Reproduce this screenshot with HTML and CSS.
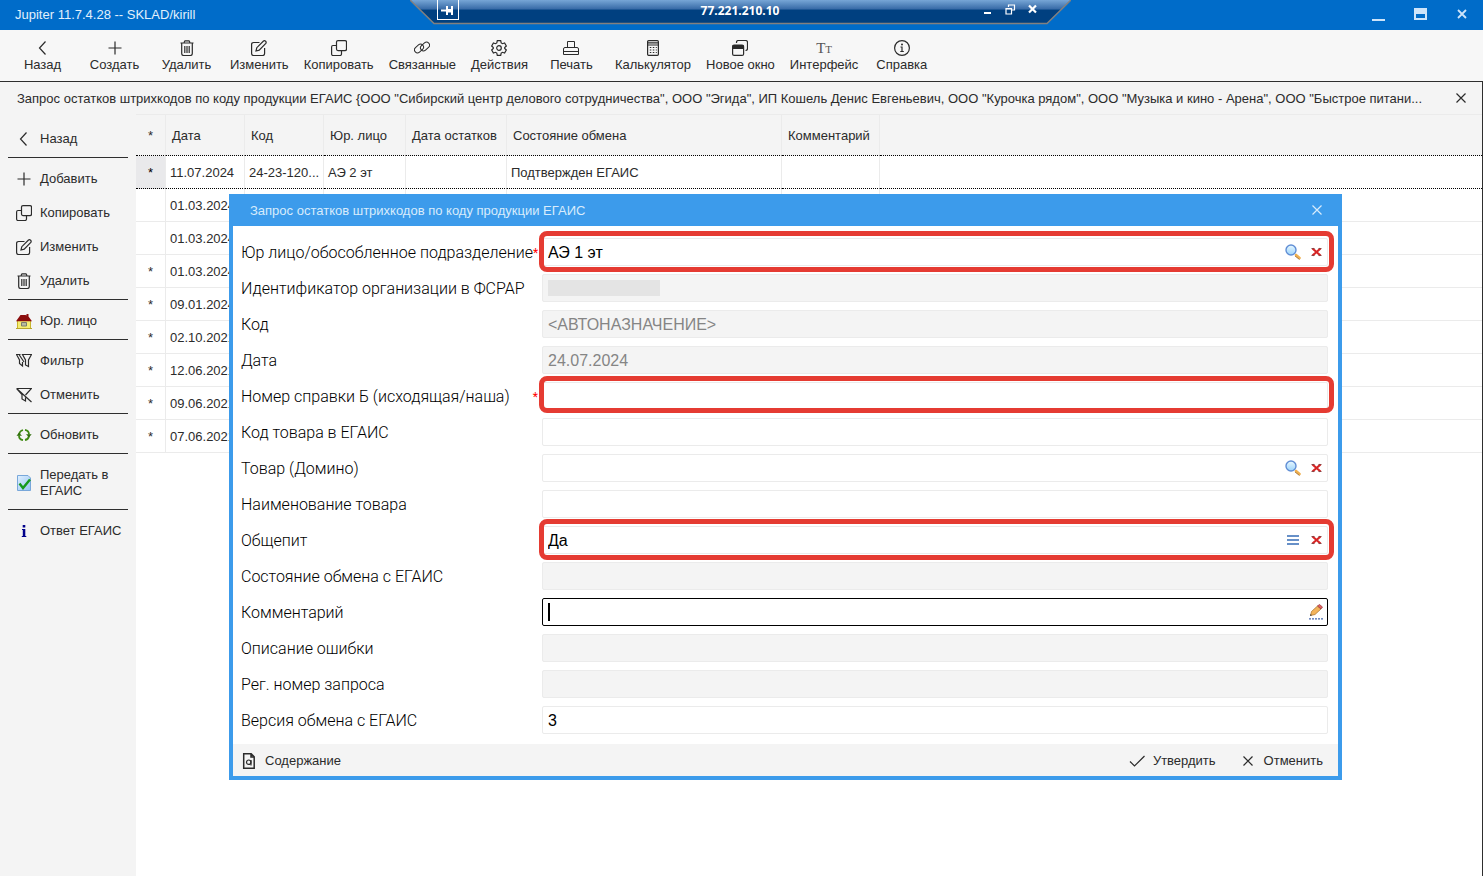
FILE: index.html
```html
<!DOCTYPE html>
<html lang="ru">
<head>
<meta charset="utf-8">
<title>Jupiter 11.7.4.28 -- SKLAD/kirill</title>
<link rel="stylesheet" href="styles.css">
</head>
<body>
<svg class="sprite" aria-hidden="true">
  <defs>
    <linearGradient id="lens" x1="0" y1="0" x2="0" y2="1"><stop offset="0" stop-color="#e9f8ff"/><stop offset="1" stop-color="#9bd3fb"/></linearGradient>
    <linearGradient id="sheet" x1="0" y1="0" x2="1" y2="1"><stop offset="0" stop-color="#e0f0ff"/><stop offset="1" stop-color="#94c4f2"/></linearGradient>
  </defs>
  <symbol id="back" viewBox="0 0 16 16"><path class="ln" d="M10.5 1.5 4.5 8l6 6.5"/></symbol>
  <symbol id="plus" viewBox="0 0 16 16"><path class="ln" d="M8 1.5v13M1.5 8h13"/></symbol>
  <symbol id="trash" viewBox="0 0 16 16"><path class="ln" d="M1.5 3h13M5 2.5 6 .8h4l1 1.7M2.7 3.5v10q0 2 2 2h6.6q2 0 2-2v-10M5.8 6v7M8 6v7M10.2 6v7"/></symbol>
  <symbol id="edit" viewBox="0 0 16 16"><path class="ln" d="M8.5 2.5H2.6Q.6 2.5.6 4.5v9q0 2 2 2h9q2 0 2-2V8M5 11l.8-3.3L12.500 1q1-.8 2.100.2 1 1.100.2 2.200L8.200 10.200Z"/></symbol>
  <symbol id="copy" viewBox="0 0 16 16"><rect class="ln" x="5.500" y=".6" width="10" height="10" rx="1.500"/><path class="ln" d="M5.500 5.500H2Q.6 5.500.6 7v7q0 1.500 1.400 1.500H9q1.500 0 1.500-1.500v-3.400"/></symbol>
  <symbol id="link" viewBox="0 0 16 16"><g class="ln thin"><rect x="0" y="5.500" width="10" height="6" rx="3" transform="rotate(-42 5 8.500)"/><rect x="6" y="3.500" width="10" height="6" rx="3" transform="rotate(-42 11 6.500)"/></g></symbol>
  <symbol id="gear" viewBox="0 0 16 16"><path class="ln" d="M6.300.7h3.400l.5 2.200 1.300.8 2.100-.7 1.700 3-1.600 1.500v1l1.600 1.500-1.700 3-2.100-.7-1.300.8-.5 2.200H6.300l-.5-2.200-1.300-.8-2.100.7-1.700-3 1.600-1.500v-1L.7 6l1.700-3 2.100.7 1.300-.8Z"/><circle class="ln" cx="8" cy="8" r="2.300"/></symbol>
  <symbol id="print" viewBox="0 0 16 16"><path class="ln thin" d="M4.500 7.500v-6h7v6M2 7.500h12q1.500 0 1.500 1.500v5.500H.5V9Q.5 7.500 2 7.500ZM.5 11.500h15"/></symbol>
  <symbol id="calc" viewBox="0 0 16 16"><rect class="ln" x="2.600" y=".7" width="10.800" height="14.600" rx="1"/><path class="ln" d="M3 2.800h10M3 5h10"/><path class="ln" stroke-dasharray="1.500 1.500" d="M4.800 7.500h7M4.800 10h7M4.800 12.500h7"/></symbol>
  <symbol id="windows" viewBox="0 0 16 16"><path class="ln" d="M4.500 3V2.500q0-2 2-2h7q2 0 2 2v6q0 2-2 2"/><rect class="ln" x=".6" y="5" width="11" height="10.400" rx="1.500"/><path class="fl" d="M.6 5h11v4H.6z"/></symbol>
  <symbol id="info" viewBox="0 0 16 16"><circle class="ln" cx="8" cy="8" r="7.400"/><path class="ln" d="M6.500 7H8v4.500M6.300 11.500h3.500"/><circle class="fl" cx="8" cy="4.500" r="1"/></symbol>
  <symbol id="house" viewBox="0 0 16 16"><path fill="#f5ee72" stroke="#c8b52e" d="M1.500 7.500h13v8h-13z"/><path fill="#8b0d0d" d="M4.500 2 0 8.200h16L12.500 3.500V1h-2v1.500L9.500 2Z"/><path fill="#b8bca0" stroke="#7c7c6c" d="M5.500 9.500h5v3.500h-5z"/><path stroke="#b7a52c" d="M0 15.500h16"/></symbol>
  <symbol id="filters" viewBox="0 0 16 16"><path class="ln" d="M6.500 1.500h9l-3 5.500v6.500L9.500 12V7ZM4.500 1.500H.5L3.500 7v3.500l3 2.500V9M3 1.500 8 9"/></symbol>
  <symbol id="nofilter" viewBox="0 0 16 16"><path class="ln" d="M.6 1.500h14.900L9.500 8M.6 1.500l5.400 6v4.500l3.500 2v-3.500M.6 1.500 15.500 15"/></symbol>
  <symbol id="refresh" viewBox="0 0 16 16"><g fill="none" stroke="#3f8a12" stroke-width="1.800"><path d="M3 7.500q.5-3.500 4-4.500M9 2.800q4 .7 4 4.700M13 9q-.5 3.300-4 4M7 13.200Q3 12.500 3 8.500"/></g><path fill="#2f6d0b" d="M.5 8.800 3 5.800l3 3ZM10 7.200l3 3 2.700-3Z"/></symbol>
  <symbol id="send" viewBox="0 0 16 16"><path fill="url(#sheet)" stroke="#78a7da" d="M1.500.5h10.500l2.500 2.500v12.500h-13z"/><path fill="none" stroke="#159a1c" stroke-width="2.400" d="m3.500 8.500 3.500 4.500 7-8.500"/></symbol>
  <symbol id="bluei" viewBox="0 0 16 16"><path fill="#00008b" d="M6.700 2h2.600v2.500H6.700zM6 6h3.300v7h1v1H5.800v-1h1V7H6z"/></symbol>
  <symbol id="cross" viewBox="0 0 16 16"><path class="ln" d="m3.500 3.500 9 9m0-9-9 9"/></symbol>
  <symbol id="check" viewBox="0 0 16 16"><path class="ln" d="m1 8.500 4.500 4.500 10-10"/></symbol>
  <symbol id="search" viewBox="0 0 16 16"><path stroke="#efb04f" stroke-width="2.600" stroke-linecap="round" d="m11 11 3.500 3"/><path stroke="#9a672c" stroke-width=".8" d="m10 12 4.500 3.500"/><circle cx="6" cy="6" r="5" fill="url(#lens)" stroke="#608ed5" stroke-width="1.400"/></symbol>
  <symbol id="clear" viewBox="0 0 16 16"><path stroke="#d62525" stroke-width="2.200" d="m4.500 4.500 8 7m0-7-8 7"/><path stroke="#8a4444" d="M3.500 4.500h3m4 0h3M3.500 11.500h3m4 0h3"/></symbol>
  <symbol id="list" viewBox="0 0 16 16"><path stroke="#6790c8" stroke-width="2" d="M2 4h12M2 8h12M2 12h12"/></symbol>
  <symbol id="pencil" viewBox="0 0 16 16"><path fill="#f3b45b" stroke="#a6702b" stroke-width=".7" d="m2.500 11.500 1-4 6-5.500 3.500 3-6 5.500Z"/><path fill="#e26060" stroke="#943535" stroke-width=".7" d="m9.500 2 2-1.500 3 2.500L13 5Z"/><path fill="#444" d="m2 12 .5-2 1.500 1.300Z"/><path stroke="#4668ae" stroke-width="1.300" stroke-dasharray="2 1" d="M1 14.800h14"/></symbol>
  <symbol id="doc" viewBox="0 0 16 16"><path class="ln thick" d="M2.700.8h7.500l3 3v11.500H2.700zM10 .8v3.200h3.200"/><circle class="ln" cx="7.700" cy="9.200" r="2.200"/><path class="ln" d="M10 7v5.500"/></symbol>
</svg>

<header class="titlebar">
  <span>Jupiter 11.7.4.28 -- SKLAD/kirill</span>
  <div class="win-controls">
    <button aria-label="Свернуть"><svg viewBox="0 0 16 16"><path d="M2 13h13" stroke="#cde4fa" stroke-width="2"/></svg></button>
    <button aria-label="Развернуть"><svg viewBox="0 0 16 16"><path d="M2 1h13v12H2z" fill="#cde4fa"/><path d="M4 7h9v4H4z" fill="#006cc9"/></svg></button>
    <button aria-label="Закрыть"><svg viewBox="0 0 16 16"><path d="m4 3 8 8m0-8-8 8" stroke="#cde4fa" stroke-width="1.800"/></svg></button>
  </div>
  <div class="remote">
    <svg class="remote-bg" viewBox="0 0 661 25" preserveAspectRatio="none">
      <defs><linearGradient id="rb" x1="0" y1="0" x2="0" y2="1"><stop offset="0" stop-color="#77a6d6"/><stop offset=".4" stop-color="#3568a5"/><stop offset=".41" stop-color="#004080"/><stop offset="1" stop-color="#004080"/></linearGradient></defs>
      <path d="M0 0 24 23.500H637L661 0" fill="url(#rb)" stroke="#82807f" stroke-width="1.500"/>
    </svg>
    <button class="pin" aria-label="Закрепить"><svg viewBox="0 0 16 16"><path d="M1 8.500h6M7 4v9M12 4v9" stroke="#fff" stroke-width="2" fill="none"/><path d="M7 7h5v3.500H7z" fill="#fff"/></svg></button>
    <span class="remote-ip">77.221.210.10</span>
    <div class="remote-controls">
      <button aria-label="Свернуть сеанс"><svg viewBox="0 0 12 12"><path d="M3 10h7" stroke="#fff" stroke-width="2"/></svg></button>
      <button aria-label="Восстановить сеанс"><svg viewBox="0 0 12 12"><path d="M4.500 4V2h6v5H8M2 5.500h5.500V11H2zM4 2h7M2 6h6" stroke="#fff" stroke-width="1.200" fill="none"/></svg></button>
      <button aria-label="Закрыть сеанс"><svg viewBox="0 0 12 12"><path d="m2 2.500 7 7m0-7-7 7" stroke="#fff" stroke-width="2.200"/></svg></button>
    </div>
  </div>
</header>

<nav class="toolbar">
  <button><svg><use href="#back"/></svg>Назад</button>
  <button><svg><use href="#plus"/></svg>Создать</button>
  <button><svg><use href="#trash"/></svg>Удалить</button>
  <button><svg><use href="#edit"/></svg>Изменить</button>
  <button><svg><use href="#copy"/></svg>Копировать</button>
  <button><svg><use href="#link"/></svg>Связанные</button>
  <button><svg><use href="#gear"/></svg>Действия</button>
  <button><svg><use href="#print"/></svg>Печать</button>
  <button><svg><use href="#calc"/></svg>Калькулятор</button>
  <button><svg><use href="#windows"/></svg>Новое окно</button>
  <button><span class="tt">T<small>T</small></span>Интерфейс</button>
  <button><svg><use href="#info"/></svg>Справка</button>
</nav>

<main class="window">
  <div class="caption">
    <h1>Запрос остатков штрихкодов по коду продукции ЕГАИС {ООО "Сибирский центр делового сотрудничества", ООО "Эгида", ИП Кошель Денис Евгеньевич, ООО "Курочка рядом", ООО "Музыка и кино - Арена", ООО "Быстрое питани...</h1>
    <button class="icon-btn" aria-label="Закрыть вкладку"><svg><use href="#cross"/></svg></button>
  </div>
  <div class="body">
    <aside class="side">
      <div class="group"><button><svg><use href="#back"/></svg>Назад</button></div>
      <div class="group">
        <button><svg><use href="#plus"/></svg>Добавить</button>
        <button><svg><use href="#copy"/></svg>Копировать</button>
        <button><svg><use href="#edit"/></svg>Изменить</button>
        <button><svg><use href="#trash"/></svg>Удалить</button>
      </div>
      <div class="group"><button><svg><use href="#house"/></svg>Юр. лицо</button></div>
      <div class="group">
        <button><svg><use href="#filters"/></svg>Фильтр</button>
        <button><svg><use href="#nofilter"/></svg>Отменить</button>
      </div>
      <div class="group"><button><svg><use href="#refresh"/></svg>Обновить</button></div>
      <div class="group"><button><svg><use href="#send"/></svg>Передать в ЕГАИС</button></div>
      <div class="group"><button><svg><use href="#bluei"/></svg>Ответ ЕГАИС</button></div>
    </aside>
    <section class="content">
      <table>
        <colgroup><col class="c-mark"><col class="c-date"><col class="c-code"><col class="c-org"><col class="c-rest"><col class="c-state"><col class="c-note"><col></colgroup>
        <thead><tr><th>*</th><th>Дата</th><th>Код</th><th>Юр. лицо</th><th>Дата остатков</th><th>Состояние обмена</th><th>Комментарий</th><th></th></tr></thead>
        <tbody>
          <tr class="current"><td>*</td><td>11.07.2024</td><td>24-23-120...</td><td>АЭ 2 эт</td><td></td><td>Подтвержден ЕГАИС</td><td></td><td></td></tr>
          <tr><td></td><td>01.03.2024</td><td></td><td></td><td></td><td></td><td></td><td></td></tr>
          <tr><td></td><td>01.03.2024</td><td></td><td></td><td></td><td></td><td></td><td></td></tr>
          <tr><td>*</td><td>01.03.2024</td><td></td><td></td><td></td><td></td><td></td><td></td></tr>
          <tr><td>*</td><td>09.01.2024</td><td></td><td></td><td></td><td></td><td></td><td></td></tr>
          <tr><td>*</td><td>02.10.2021</td><td></td><td></td><td></td><td></td><td></td><td></td></tr>
          <tr><td>*</td><td>12.06.2021</td><td></td><td></td><td></td><td></td><td></td><td></td></tr>
          <tr><td>*</td><td>09.06.2021</td><td></td><td></td><td></td><td></td><td></td><td></td></tr>
          <tr><td>*</td><td>07.06.2021</td><td></td><td></td><td></td><td></td><td></td><td></td></tr>
        </tbody>
      </table>
    </section>
  </div>
</main>

<form class="dialog" role="dialog" aria-labelledby="dlg-title">
  <div class="dialog-head">
    <h2 id="dlg-title">Запрос остатков штрихкодов по коду продукции ЕГАИС</h2>
    <button type="button" class="icon-btn" aria-label="Закрыть"><svg><use href="#cross"/></svg></button>
  </div>
  <div class="fields">
    <label for="f1">Юр лицо/обособленное подразделение<span class="req">*</span></label>
    <div class="field marked"><input id="f1" value="АЭ 1 эт"><button type="button" class="icon-btn" aria-label="Найти"><svg><use href="#search"/></svg></button><button type="button" class="icon-btn" aria-label="Очистить"><svg><use href="#clear"/></svg></button></div>
    <label for="f2">Идентификатор организации в ФСРАР</label>
    <div class="field off"><span class="masked"></span><input id="f2" disabled></div>
    <label for="f3">Код</label>
    <div class="field off"><input id="f3" value="&lt;АВТОНАЗНАЧЕНИЕ&gt;" disabled></div>
    <label for="f4">Дата</label>
    <div class="field off"><input id="f4" value="24.07.2024" disabled></div>
    <label for="f5">Номер справки Б (исходящая/наша)<span class="req">*</span></label>
    <div class="field marked slim"><input id="f5"></div>
    <label for="f6">Код товара в ЕГАИС</label>
    <div class="field"><input id="f6"></div>
    <label for="f7">Товар (Домино)</label>
    <div class="field"><input id="f7"><button type="button" class="icon-btn" aria-label="Найти товар"><svg><use href="#search"/></svg></button><button type="button" class="icon-btn" aria-label="Очистить товар"><svg><use href="#clear"/></svg></button></div>
    <label for="f8">Наименование товара</label>
    <div class="field"><input id="f8"></div>
    <label for="f9">Общепит</label>
    <div class="field marked"><input id="f9" value="Да"><button type="button" class="icon-btn" aria-label="Выбрать"><svg><use href="#list"/></svg></button><button type="button" class="icon-btn" aria-label="Сбросить"><svg><use href="#clear"/></svg></button></div>
    <label for="f10">Состояние обмена с ЕГАИС</label>
    <div class="field off"><input id="f10" disabled></div>
    <label for="f11">Комментарий</label>
    <div class="field active"><span class="caret"></span><input id="f11"><button type="button" class="icon-btn" aria-label="Редактировать"><svg><use href="#pencil"/></svg></button></div>
    <label for="f12">Описание ошибки</label>
    <div class="field off"><input id="f12" disabled></div>
    <label for="f13">Рег. номер запроса</label>
    <div class="field off"><input id="f13" disabled></div>
    <label for="f14">Версия обмена с ЕГАИС</label>
    <div class="field"><input id="f14" value="3"></div>
  </div>
  <div class="dialog-foot">
    <button type="button"><svg><use href="#doc"/></svg>Содержание</button>
    <span class="spacer"></span>
    <button type="button"><svg><use href="#check"/></svg>Утвердить</button>
    <button type="button"><svg><use href="#cross"/></svg>Отменить</button>
  </div>
</form>
</body>
</html>
```
FILE: styles.css
```css
* { box-sizing: border-box; }

body {
  margin: 0;
  min-height: 100vh;
  display: flex;
  flex-direction: column;
  position: relative;
  background: #fff;
  color: #2b2b2b;
  font: 13px/16px "Liberation Sans", Arial, sans-serif;
}

button {
  border: 0;
  padding: 0;
  background: none;
  color: inherit;
  font: inherit;
}

svg { display: block; flex: none; }
.sprite { position: absolute; width: 0; height: 0; }
.ln { fill: none; stroke: currentColor; stroke-width: 1.2; }
.ln.thin { stroke-width: 1; }
.ln.thick { stroke-width: 1.5; }
.fl { fill: currentColor; }

.titlebar {
  position: relative;
  display: flex;
  align-items: center;
  justify-content: space-between;
  height: 30px;
  padding: 0 13px 0 15px;
  background: #006cc9;
  color: #e2f0fc;
}
.win-controls { display: flex; gap: 26px; }
.win-controls svg { width: 16px; height: 16px; }

.remote {
  position: absolute;
  top: 0;
  left: calc(50% - 332px);
  width: 661px;
  height: 25px;
  display: flex;
  align-items: flex-start;
  justify-content: space-between;
  padding: 0 32px 0 27px;
}
.remote-bg { position: absolute; inset: 0; width: 100%; height: 100%; }
.remote-ip {
  position: absolute;
  inset: 3px 0 auto;
  text-align: center;
  color: #fff;
  font: bold 12px/16px "Noto Sans", sans-serif;
}
.pin {
  position: relative;
  width: 22px;
  height: 20px;
  padding: 1px 2px;
  border: 1px solid #fff;
  border-top: 0;
}
.pin svg { width: 16px; height: 16px; }
.remote-controls { position: relative; display: flex; gap: 11px; padding-top: 3px; }
.remote-controls svg { width: 12px; height: 12px; }

.toolbar {
  display: flex;
  gap: 1px;
  height: 51px;
  padding: 10px 7px 0;
  background: #f7f7f7;
}
.toolbar button {
  display: flex;
  flex-direction: column;
  align-items: center;
  justify-content: flex-start;
  gap: 1px;
  min-width: 71px;
  padding: 0 7px;
}
.toolbar svg, .tt { width: 16px; height: 16px; }
.tt {
  display: flex;
  align-items: baseline;
  justify-content: center;
  color: #555;
  font: 15px/16px "Liberation Serif", serif;
}
.tt small { font-size: 11px; }

.window {
  flex: 1;
  display: flex;
  flex-direction: column;
  border-top: 1px solid #2e2e2e;
  border-right: 1px solid #2e2e2e;
}
.caption {
  display: flex;
  align-items: center;
  justify-content: space-between;
  gap: 20px;
  height: 32px;
  padding: 0 13px 0 17px;
  background: #f4f4f4;
}
h1, h2 { margin: 0; padding-top: 2px; font: inherit; }
h1 { flex: 1; min-width: 0; overflow: hidden; white-space: nowrap; text-overflow: ellipsis; }

.body { flex: 1; display: flex; }
.side { width: 136px; padding: 4px 8px; background: #f4f4f4; }
.group { padding: 3px 0 2px; border-bottom: 1px solid #2e2e2e; }
.group:last-child { border-bottom: 0; }
.group button {
  display: flex;
  align-items: center;
  gap: 8px;
  width: 100%;
  min-height: 34px;
  padding: 10px 0 8px 8px;
  text-align: left;
}
.group svg, .icon-btn svg, .dialog-foot svg { width: 16px; height: 16px; }

.content { flex: 1; min-width: 0; }
table { width: 100%; table-layout: fixed; border-spacing: 0; }
.c-mark { width: 30px; }
.c-date, .c-code { width: 79px; }
.c-org { width: 82px; }
.c-rest { width: 101px; }
.c-state { width: 275px; }
.c-note { width: 98px; }
th, td {
  border-right: 1px solid #ebebeb;
  font-weight: normal;
  text-align: left;
  white-space: nowrap;
}
th {
  height: 42px;
  padding: 2px 0 0 6px;
  border-top: 1px solid #ebebeb;
  border-bottom: 1px dotted #000;
  background: #f4f4f4;
}
td { height: 33px; padding: 2px 0 0 4px; border-bottom: 1px solid #ebebeb; }
th:first-child, td:first-child { padding: 2px 0 0; text-align: center; }
th:last-child, td:last-child { border-right: 0; }
.current td { border-bottom: 1px dotted #000; }
.current td:first-child { background: #e9e9eb; color: #000; }

.dialog {
  position: absolute;
  top: 194px;
  left: 229px;
  right: 141px;
  border: 4px solid #3c9beb;
  border-top: 0;
  background: #fff;
}
.dialog-head {
  display: flex;
  align-items: center;
  justify-content: space-between;
  height: 32px;
  padding: 0 13px 0 17px;
  background: #3c9beb;
  color: #d8ecfc;
}
.fields {
  display: grid;
  grid-template-columns: 301px 1fr;
  row-gap: 8px;
  padding: 12px 10px 10px 8px;
  color: #000;
  font-size: 16px;
}
.fields label {
  display: flex;
  align-items: center;
  justify-content: space-between;
  padding: 2px 4px 0 0;
  font-family: Roboto, "Liberation Sans", sans-serif;
  font-weight: 300;
  white-space: nowrap;
}
.req { color: #f00; font-size: 12px; font-weight: 400; }
.field {
  position: relative;
  display: flex;
  align-items: center;
  gap: 7px;
  height: 28px;
  padding: 0 3px 0 5px;
  border: 1px solid #ebebeb;
  border-radius: 2px;
}
.field input {
  flex: 1;
  min-width: 0;
  height: 24px;
  padding: 1px 0 0;
  border: 0;
  outline: 0;
  background: none;
  color: inherit;
  font: inherit;
}
.field.off { background: #f4f4f4; color: #858585; }
.field.active { border-color: #000; }
.field.marked::after {
  content: "";
  position: absolute;
  inset: -8px -7px -7px -4px;
  border: 5px solid #e53b32;
  border-radius: 8px;
  pointer-events: none;
}
.field.slim::after { inset: -7px -7px -4px -4px; }
.masked { width: 112px; height: 16px; background: #e4e4e4; }
.caret { width: 2px; height: 18px; background: #000; }

.dialog-foot {
  display: flex;
  align-items: center;
  gap: 24px;
  height: 36px;
  padding: 1px 15px 0 8px;
  border-bottom: 4px solid #3c9beb;
  margin-bottom: -4px;
  background: #f4f4f4;
}
.dialog-foot button { display: flex; align-items: center; gap: 8px; }
.spacer { flex: 1; }
```
